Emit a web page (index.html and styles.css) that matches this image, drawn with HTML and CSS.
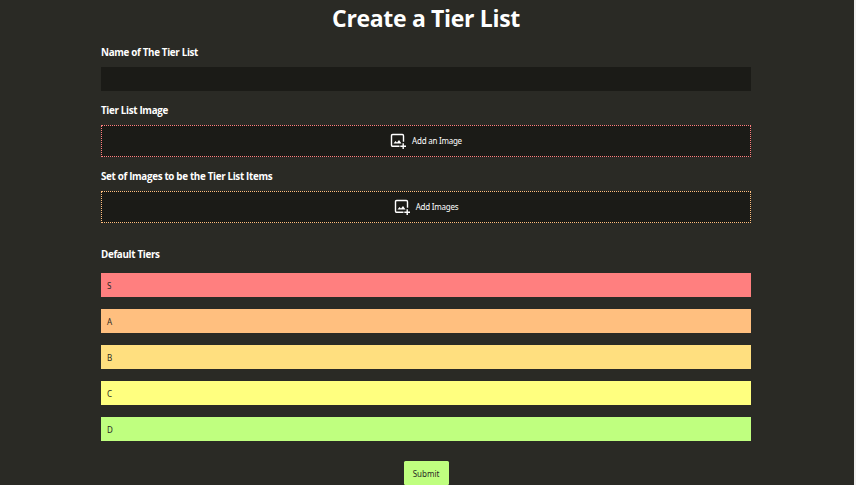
FILE: index.html
```html
<!DOCTYPE html>
<html lang="en">
<head>
<meta charset="utf-8">
<title>Create a Tier List</title>
<link rel="stylesheet" href="styles.css">
</head>
<body>
<main class="page">
  <h1 class="title">Create a Tier List</h1>
  <form class="form">
    <label class="label" for="name">Name of The Tier List</label>
    <input class="name" id="name" type="text">
    <div class="label">Tier List Image</div>
    <div class="drop drop-red">
      <svg class="icon" viewBox="0 0 16 16"><path d="M9.5 13.2H2.7Q1.5 13.2 1.5 12V2.7Q1.5 1.5 2.7 1.5H12.3Q13.5 1.5 13.5 2.7V8.8" fill="none" stroke="currentColor" stroke-width="1.4"/><path d="M3.5 10.6 5.5 8 7 9.6 9 6.9 11.5 10.6Z" fill="currentColor"/><path d="M13.2 10.3V16M10.3 13.2H16" fill="none" stroke="currentColor" stroke-width="1.4"/></svg>
      <span>Add an Image</span>
    </div>
    <div class="label">Set of Images to be the Tier List Items</div>
    <div class="drop drop-orange">
      <svg class="icon" viewBox="0 0 16 16"><path d="M9.5 13.2H2.7Q1.5 13.2 1.5 12V2.7Q1.5 1.5 2.7 1.5H12.3Q13.5 1.5 13.5 2.7V8.8" fill="none" stroke="currentColor" stroke-width="1.4"/><path d="M3.5 10.6 5.5 8 7 9.6 9 6.9 11.5 10.6Z" fill="currentColor"/><path d="M13.2 10.3V16M10.3 13.2H16" fill="none" stroke="currentColor" stroke-width="1.4"/></svg>
      <span>Add Images</span>
    </div>
    <div class="label label-tiers">Default Tiers</div>
    <div class="tiers">
      <div class="tier s">S</div>
      <div class="tier a">A</div>
      <div class="tier b">B</div>
      <div class="tier c">C</div>
      <div class="tier d">D</div>
    </div>
    <button class="submit" type="button">Submit</button>
  </form>
</main>
</body>
</html>
```
FILE: styles.css
```css
* { box-sizing: border-box; }
html { background: #f1f1f1; }
body {
  margin: 0;
  height: 485px;
  overflow: hidden;
  font-family: "Segoe UI", "Noto Sans", "Open Sans", sans-serif;
  color: #fff;
}
.page {
  width: 854px;
  height: 485px;
  padding: 0 103px 0 101px;
  background: #2a2a25;
}
.title {
  margin: 0;
  height: 38px;
  font-family: "Segoe UI", "Open Sans", "Noto Sans", sans-serif;
  font-size: 23px;
  line-height: 36px;
  font-weight: 700;
  text-align: center;
  white-space: nowrap;
  letter-spacing: -0.33px;
}
.form { display: flex; flex-direction: column; }
.label {
  height: 14px;
  margin: 8px 0 7px;
  font-family: "Segoe UI", "Open Sans", "Noto Sans", sans-serif;
  font-size: 9.8px;
  line-height: 13px;
  font-weight: 700;
  letter-spacing: -0.32px;
  white-space: nowrap;
}
.name {
  height: 24px;
  margin-bottom: 5px;
  padding: 0 6px;
  border: 0;
  outline: 0;
  background: #1b1b17;
  color: #fff;
}
.drop {
  display: flex;
  align-items: center;
  justify-content: center;
  gap: 6px;
  height: 32px;
  margin-bottom: 5px;
  background: #1b1b17;
  border: 1px dotted;
  font-size: 8px;
  line-height: 12px;
  letter-spacing: -0.24px;
  white-space: nowrap;
}
.drop span { color: #fff; }
.drop-red { border-color: #ff7f7f; }
.drop-orange { border-color: #ffbf7f; }
.icon { width: 16px; height: 16px; color: #fff; }
.label-tiers { margin: 20px 0 11px; }
.tiers { display: grid; gap: 12px; }
.tier {
  height: 24px;
  padding-left: 6px;
  font-size: 8px;
  line-height: 25px;
  color: #2a2a25;
}
.s { background: #ff7f7f; }
.a { background: #ffbf7f; }
.b { background: #ffdf7f; }
.c { background: #ffff7f; }
.d { background: #bfff7f; }
.submit {
  align-self: center;
  width: 45px;
  height: 24px;
  margin: 20px 0 0;
  padding: 0;
  border: 0;
  border-radius: 1.5px;
  background: #bfff7f;
  color: #2a2a25;
  font: 8px/25px "Segoe UI", "Noto Sans", "Open Sans", sans-serif;
  letter-spacing: 0;
}
```
